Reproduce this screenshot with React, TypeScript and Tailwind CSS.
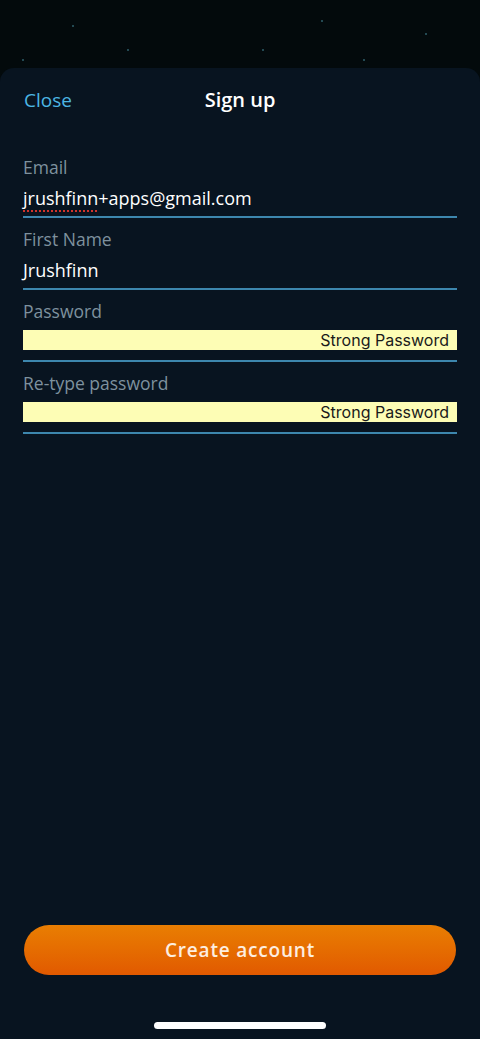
import React from 'react';

const stars = [
  { x: 72, y: 25 },
  { x: 321, y: 20 },
  { x: 425, y: 33 },
  { x: 127, y: 49 },
  { x: 22, y: 59 },
  { x: 262, y: 49 },
  { x: 363, y: 59 },
];

function Field({ label, children }: { label: string; children: React.ReactNode }) {
  return (
    <div className="mx-[23px] mb-[10px] border-b-2 border-[#3d87ae] pb-[6px]">
      <div className="h-[22px] text-[17.5px] leading-[22px] text-[#7e919e]">{label}</div>
      <div className="mt-[8px] h-[24px] text-[18px] leading-[24px] text-white">{children}</div>
    </div>
  );
}

function StrongBox() {
  return (
    <div className="mt-[2px] flex h-[20px] items-center justify-end bg-[#fdfdb5] pr-[8px] font-['Inter',sans-serif] text-[16px] text-[#1a1a1a]">
      Strong Password
    </div>
  );
}

export default function App() {
  return (
    <div className="flex min-h-[1039px] flex-col bg-[#030a0c] font-['Open_Sans',sans-serif]">
      {/* starry background */}
      <div className="relative h-[68px] shrink-0">
        {stars.map((s, i) => (
          <div
            key={i}
            className="absolute h-[2px] w-[2px] rounded-full bg-[#2f5f6a]"
            style={{ left: s.x, top: s.y }}
          />
        ))}
      </div>

      <div className="flex flex-1 flex-col rounded-t-[14px] bg-[#081420]">
        <div className="relative flex h-[64px] items-center justify-center">
          <span className="absolute left-[24px] text-[19px] font-medium text-[#4cb6e3]">Close</span>
          <span className="text-[20px] font-semibold text-white">Sign up</span>
        </div>

        <div className="mt-[24px]">
          <Field label="Email">
            <span className="underline decoration-[#d0342c] decoration-dotted decoration-2 underline-offset-[5px]">jrushfinn</span>
            +apps@gmail.com
          </Field>
          <Field label="First Name">Jrushfinn</Field>
          <Field label="Password">
            <StrongBox />
          </Field>
          <Field label="Re-type password">
            <StrongBox />
          </Field>
        </div>

        <div className="flex-1" />

        <div className="mx-[24px] flex h-[50px] items-center justify-center rounded-full bg-gradient-to-b from-[#e97e02] to-[#e15900]">
          <span className="text-[19px] font-semibold tracking-[0.8px] text-[#fdeee0]">Create account</span>
        </div>

        <div className="mt-[47px] mb-[10px] flex justify-center">
          <div className="h-[7px] w-[172px] rounded-full bg-white" />
        </div>
      </div>
    </div>
  );
}
